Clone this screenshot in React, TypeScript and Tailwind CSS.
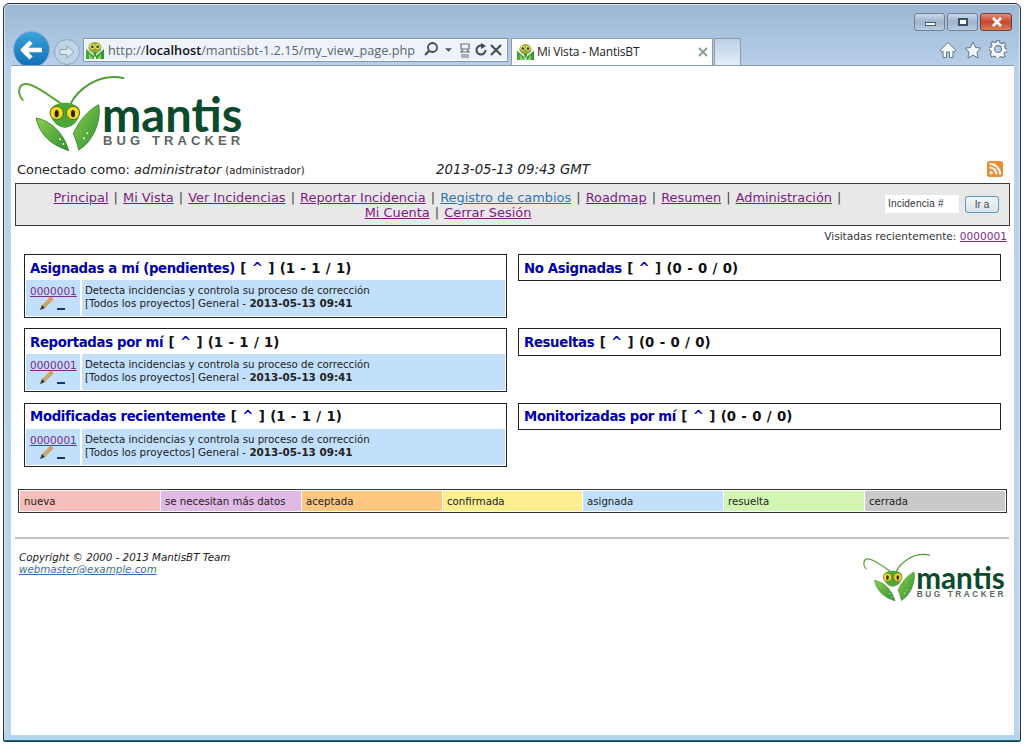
import React from "react";

const Mantis = ({ className }: { className: string }) => (
  <svg className={className} viewBox="0 0 720 255" fill="none">
    <defs>
      <linearGradient id="leaf" x1="0" y1="0" x2="1" y2="1">
        <stop offset="0" stopColor="#8fcf4a" />
        <stop offset="1" stopColor="#2f8f35" />
      </linearGradient>
    </defs>
    <path d="M172 114C125 82 72 40 45 42C24 45 22 70 38 90" stroke="#5ca83a" strokeWidth="6" strokeLinecap="round" />
    <path d="M180 105C200 62 262 8 340 24" stroke="#4f9c35" strokeWidth="6" strokeLinecap="round" />
    <path d="M78 144C120 152 160 185 176 242C150 232 95 215 78 144Z" fill="url(#leaf)" stroke="#3c8f33" strokeWidth="3" />
    <path d="M266 104C275 150 250 215 206 240C205 236 198 205 190 192C205 155 235 120 266 104Z" fill="url(#leaf)" stroke="#3c8f33" strokeWidth="3" />
    <path d="M122 118C135 92 195 92 208 118C212 150 190 172 165 174C140 172 118 150 122 118Z" fill="#4ea53a" />
    <circle cx="140" cy="129" r="20" fill="#f2d91f" stroke="#4a6e1c" strokeWidth="3" />
    <circle cx="189" cy="129" r="20" fill="#f2d91f" stroke="#4a6e1c" strokeWidth="3" />
    <ellipse cx="140" cy="131" rx="6" ry="11" fill="#2c1d0a" />
    <ellipse cx="189" cy="131" rx="6" ry="11" fill="#2c1d0a" />
    <circle cx="150" cy="208" r="3" fill="#e8f6df" />
    <circle cx="160" cy="222" r="3" fill="#e8f6df" />
    <circle cx="222" cy="205" r="3" fill="#e8f6df" />
    <circle cx="232" cy="190" r="3" fill="#e8f6df" />
  </svg>
);

const Favicon = ({ className }: { className: string }) => (
  <svg className={className} viewBox="0 0 18 18">
    <path d="M0 8L8 15V18H0Z" fill="#3fa53c" />
    <path d="M18 8L10 15V18H18Z" fill="#2f9a3a" />
    <path d="M3 12L7 18H3Z" fill="#8fd05a" />
    <path d="M15 12L11 18H15Z" fill="#8fd05a" />
    <ellipse cx="9" cy="6.500" rx="6.500" ry="5.500" fill="#9aa83a" />
    <circle cx="6.300" cy="5.500" r="2.600" fill="#e4e06a" />
    <circle cx="11.700" cy="5.500" r="2.600" fill="#e4e06a" />
    <circle cx="6.300" cy="5.800" r="1.300" fill="#2b3a14" />
    <circle cx="11.700" cy="5.800" r="1.300" fill="#2b3a14" />
    <path d="M7 11H11L9.500 16H8.500Z" fill="#4d8f2e" />
  </svg>
);

const Logo = ({ className }: { className: string }) => (
  <div className={`absolute w-[240px] h-[85px] origin-top-left ${className}`}>
    <Mantis className="absolute left-0 top-0 w-[240px] h-[85px]" />
    <span className="absolute left-[92px] top-[27px] text-[47px] leading-[34px] [font-family:Lato,sans-serif] font-bold text-[#0c4a2d]">mantis</span>
    <span className="absolute left-[93px] top-[65px] text-[13px] leading-[12px] [font-family:Liberation_Sans,sans-serif] font-bold tracking-[4.1px] whitespace-nowrap text-[#5c6560]">BUG TRACKER</span>
  </div>
);

const Row = ({ top }: { top: string }) => (
  <div className={`absolute left-[24px] w-[483px] h-[64px] border border-[#222] bg-white ${top}`}>
    <div className="absolute left-[1px] right-[1px] top-[25px] bottom-[1px] bg-[#c2dffb] flex">
      <div className="w-[56px] border-r-2 border-white relative">
        <a className="absolute left-[4px] top-[5px] text-[10.5px] leading-[13px] underline text-[#7d2a8a]">0000001</a>
        <svg className="absolute left-[13px] top-[16px] w-[15px] h-[15px]" viewBox="0 0 15 15">
          <path d="M1 14L3 9L10 2L13 5L6 12Z" fill="#c9a96a" />
          <path d="M9.500 2.500L11.500 0.500C12.500 0.300 14.500 2.300 14.200 3.500L12.500 5.500Z" fill="#e8935a" />
          <path d="M1 14L3 9L6 12Z" fill="#3a3a3a" />
        </svg>
        <div className="absolute left-[31px] top-[28px] w-[8px] h-[2px] bg-[#12366f]" />
      </div>
      <div className="pl-[3px] pt-[5px] text-[10.4px] leading-[12px] text-[#222] whitespace-nowrap">
        <div className="text-[10.2px]">Detecta incidencias y controla su proceso de corrección</div>
        <div>[Todos los proyectos] General - <b>2013-05-13 09:41</b></div>
      </div>
    </div>
  </div>
);

const Title = ({ left, top, name, count }: { left: string; top: string; name: string; count: string }) => (
  <div className={`absolute ${left} ${top} text-[13.3px] leading-[17px] font-bold whitespace-nowrap text-[#111] [word-spacing:0.7px]`}>
    <span className="text-[#0000b0] tracking-[-0.35px] [word-spacing:0px]">{name}</span> [ <span className="text-[#0000b0]">^</span> ] {count}
  </div>
);

const Empty = ({ top }: { top: string }) => (
  <div className={`absolute left-[518px] w-[483px] border border-[#222] ${top}`} />
);

const legend = [
  ["nueva", "bg-[#f7bfbb]", "w-[141px]"],
  ["se necesitan más datos", "bg-[#e0b9e4]", "w-[141px]"],
  ["aceptada", "bg-[#fdc77f]", "w-[141px]"],
  ["confirmada", "bg-[#fdee90]", "w-[140px]"],
  ["asignada", "bg-[#c2dffb]", "w-[141px]"],
  ["resuelta", "bg-[#d3f5b3]", "w-[141px]"],
  ["cerrada", "bg-[#c9c9c9]", "w-[140px]"],
];

const Sep = () => <span className="text-[#444] px-[1px]"> | </span>;
const L = ({ c, blue }: { c: string; blue?: boolean }) => (
  <a className={`underline ${blue ? "text-[#2d72b8]" : "text-[#7d1a82]"}`}>{c}</a>
);

export default function App() {
  return (
    <div className="relative w-[1024px] h-[745px] bg-white overflow-hidden [font-family:DejaVu_Sans,sans-serif]">
      {/* window frame */}
      <div className="absolute left-[3px] top-[3px] w-[1018px] h-[739px] rounded-t-[6px] rounded-b-[2px] border border-[#26343f] bg-linear-to-b from-[#9db7d4] from-0% via-[#b9d1ea] via-[9%] to-[#bcd5ea] shadow-[inset_0_0_0_1px_#dbe7f3]" />
      <div className="absolute left-[4px] bottom-[4px] w-[1016px] h-[9px] bg-linear-to-b from-[#bcd4ea] to-[#aed7ee] border-b border-[#0f6f85]" />

      {/* back / forward */}
      <div className="absolute left-[13px] top-[31px] w-[37px] h-[37px] rounded-full bg-linear-to-b from-[#3aa2dc] to-[#0d6fb4] border border-[#8cb0cf]">
        <svg className="absolute left-[6px] top-[8px] w-[24px] h-[20px]" viewBox="0 0 24 20">
          <path d="M11 2L3 10L11 18M4 10H22" stroke="#fff" strokeWidth="4.5" fill="none" strokeLinejoin="round" />
        </svg>
      </div>
      <div className="absolute left-[54px] top-[39px] w-[26px] h-[26px] rounded-full bg-[#c0d4e8] border border-[#8ea9c4]">
        <svg className="absolute left-[4px] top-[5px] w-[16px] h-[14px]" viewBox="0 0 16 14">
          <path d="M8 1L15 7L8 13V9.500H1V4.500H8Z" fill="#dde8f3" stroke="#8ba2b9" strokeWidth="1" strokeLinejoin="round" />
        </svg>
      </div>

      {/* address bar */}
      <div className="absolute left-[83px] top-[38px] w-[425px] h-[24px] border border-[#7f98ae] bg-[#edf3f9] shadow-[inset_0_0_0_1px_#fff]" />
      <Favicon className="absolute left-[86px] top-[41px] w-[18px] h-[18px]" />
      <div className="absolute left-[108px] top-[41px] h-[18px] text-[12.75px] leading-[18px] [font-family:Open_Sans,sans-serif] whitespace-nowrap text-[#5a6570]">
        http://<span className="text-[#111] font-semibold">localhost</span>/mantisbt-1.2.15/my_view_page.php
      </div>
      <svg className="absolute left-[423px] top-[41px] w-[16px] h-[16px]" viewBox="0 0 16 16" fill="none">
        <circle cx="9.5" cy="6.5" r="4.5" stroke="#3e4a54" strokeWidth="1.8" />
        <path d="M6 10L2 14" stroke="#3e4a54" strokeWidth="2.2" />
      </svg>
      <svg className="absolute left-[445px] top-[48px] w-[7px] h-[4px]" viewBox="0 0 8 4"><path d="M0 0H8L4 4Z" fill="#4a5660" /></svg>
      <svg className="absolute left-[459px] top-[43px] w-[12px] h-[15px]" viewBox="0 0 12 15" fill="none" stroke="#66727c" strokeWidth="1.2">
        <path d="M2 1H10V6H2ZM1 9H11M2 12H10M2 14H10M4 7L2 9M8 7L10 9" />
      </svg>
      <svg className="absolute left-[474px] top-[43px] w-[14px] h-[14px]" viewBox="0 0 14 14" fill="none">
        <path d="M11.5 7A4.5 4.5 0 1 1 8 2.7" stroke="#3e4a54" strokeWidth="2" />
        <path d="M7 0L12 3L7 6Z" fill="#3e4a54" />
      </svg>
      <svg className="absolute left-[490px] top-[44px] w-[12px] h-[12px]" viewBox="0 0 12 12"><path d="M1 1L11 11M11 1L1 11" stroke="#3e4a54" strokeWidth="2" /></svg>

      {/* tabs */}
      <div className="absolute left-[511px] top-[38px] w-[202px] h-[28px] bg-white border border-b-0 border-[#8b9cad]" />
      <Favicon className="absolute left-[517px] top-[43px] w-[17px] h-[17px]" />
      <div className="absolute left-[537px] top-[43px] text-[12px] leading-[18px] tracking-[-0.2px] [font-family:Open_Sans,sans-serif] whitespace-nowrap text-[#222]">Mi Vista - MantisBT</div>
      <svg className="absolute left-[698px] top-[47px] w-[10px] h-[10px]" viewBox="0 0 10 10"><path d="M1 1L9 9M9 1L1 9" stroke="#8c969f" strokeWidth="1.8" /></svg>
      <div className="absolute left-[714px] top-[38px] w-[27px] h-[27px] border border-b-0 border-[#8b9cad] bg-linear-to-b from-[#bcd0e6] to-[#e3edf7]" />

      {/* window buttons */}
      <div className="absolute left-[914px] top-[13px] w-[31px] h-[18px] rounded-[3px] border border-[#6d8197] bg-linear-to-b from-[#c9d9ea] via-[#9db4cc] to-[#b9cde2]">
        <div className="absolute left-[10px] top-[8px] w-[11px] h-[4px] bg-white border border-[#4a5a6a]" />
      </div>
      <div className="absolute left-[947px] top-[13px] w-[31px] h-[18px] rounded-[3px] border border-[#6d8197] bg-linear-to-b from-[#c9d9ea] via-[#9db4cc] to-[#b9cde2]">
        <div className="absolute left-[10px] top-[4px] w-[10px] h-[8px] bg-white border-2 border-[#3f4f5f]" />
      </div>
      <div className="absolute left-[980px] top-[13px] w-[32px] h-[18px] rounded-[3px] border border-[#6e3f36] bg-linear-to-b from-[#e08d78] via-[#c9452c] to-[#d67f5f]">
        <svg className="absolute left-[11px] top-[3px] w-[10px] h-[10px]" viewBox="0 0 10 10"><path d="M1 1L9 9M9 1L1 9" stroke="#fff" strokeWidth="2.6" /></svg>
      </div>

      {/* right icons */}
      <svg className="absolute left-[939px] top-[41px] w-[18px] h-[18px]" viewBox="0 0 18 18">
        <path d="M9 1.5L1 9.5L3 11L4 10V16.5H7.5V11H10.5V16.5H14V10L15 11L17 9.5Z" fill="#f4f8fc" stroke="#66788a" strokeWidth="1" strokeLinejoin="round" />
      </svg>
      <svg className="absolute left-[964px] top-[41px] w-[18px] h-[18px]" viewBox="0 0 18 18">
        <path d="M9 1L11.5 6.5L17 7.2L13 11L14 17L9 14L4 17L5 11L1 7.2L6.5 6.5Z" fill="#f4f8fc" stroke="#66788a" strokeWidth="1" strokeLinejoin="round" />
      </svg>
      <svg className="absolute left-[989px] top-[40px] w-[18px] h-[18px]" viewBox="0 0 24 24" fill="#f4f8fc" stroke="#66788a" strokeWidth="1.4">
        <path d="M10 1h4l.6 3 2.4 1 2.6-1.7 2.8 2.8L20.700 8.700l1 2.400 2.300.9v4l-3 .6-1 2.400 1.700 2.400-2.800 2.300-2.500-1.600-2.400 1-.5 2.400h-4l-.6-3-2.400-1-2.600 1.600L1.600 19l1.700-2.500-1-2.400L0 13.500v-3.500l3-.6 1-2.400L2.300 4.500 5.100 2l2.500 1.700 2-.9z" />
        <circle cx="12" cy="12" r="4.500" fill="#b9d1ea" />
      </svg>

      {/* page */}
      <div className="absolute left-[11px] top-[65px] w-[1003px] h-[670px] bg-white border-t border-[#8b9cad]" />

      <Logo className="left-[10px] top-[70px]" />

      <div className="absolute left-[17px] top-[162px] text-[12.9px] leading-[16px] whitespace-nowrap text-[#222]">
        Conectado como: <i>administrator</i> <span className="text-[10.2px]">(administrador)</span>
      </div>
      <div className="absolute left-[436px] top-[162px] text-[13.3px] leading-[16px] italic whitespace-nowrap text-[#222]">2013-05-13 09:43 GMT</div>
      <svg className="absolute left-[987px] top-[161px] w-[16px] h-[16px] rounded-[2px]" viewBox="0 0 16 16">
        <rect width="16" height="16" rx="2" fill="#f28a2e" />
        <circle cx="4.200" cy="11.800" r="1.700" fill="#fff" />
        <path d="M2.500 6.500A7 7 0 0 1 9.500 13.500M2.500 2.800A10.700 10.700 0 0 1 13.200 13.500" stroke="#fff" strokeWidth="2" fill="none" />
      </svg>

      {/* menu */}
      <div className="absolute left-[15px] top-[183px] w-[995px] h-[43px] bg-[#e8e8e8] border border-[#3c3c3c]" />
      <div className="absolute left-[16px] top-[190px] w-[864px] text-center text-[12.9px] leading-[15px] text-[#444]">
        <div className="whitespace-nowrap">
          <L c="Principal" /><Sep /><L c="Mi Vista" /><Sep /><L c="Ver Incidencias" /><Sep /><L c="Reportar Incidencia" /><Sep /><L c="Registro de cambios" blue /><Sep /><L c="Roadmap" /><Sep /><L c="Resumen" /><Sep /><L c="Administración" /><Sep />
        </div>
        <div className="whitespace-nowrap">
          <L c="Mi Cuenta" /><Sep /><L c="Cerrar Sesión" />
        </div>
      </div>
      <div className="absolute left-[885px] top-[195px] w-[74px] h-[18px] bg-white text-[10px] leading-[18px] pl-[3px] [font-family:Liberation_Sans,sans-serif] tracking-[0.2px] text-[#333]">Incidencia #</div>
      <div className="absolute left-[965px] top-[196px] w-[34px] h-[17px] rounded-[3px] border border-[#5d9cbc] bg-linear-to-b from-[#f0f5f8] to-[#d7e3ea] text-[10px] leading-[15px] text-center [font-family:Liberation_Sans,sans-serif] text-[#444]">Ir a</div>
      <div className="absolute right-[17px] top-[229px] text-[10.6px] leading-[14px] whitespace-nowrap text-[#333]">
        Visitadas recientemente: <a className="underline text-[#7d2a8a]">0000001</a>
      </div>

      {/* panels */}
      <Row top="top-[254px]" />
      <Title left="left-[30px]" top="top-[260px]" name="Asignadas a mí (pendientes)" count="(1 - 1 / 1)" />
      <Row top="top-[328px]" />
      <Title left="left-[30px]" top="top-[334px]" name="Reportadas por mí" count="(1 - 1 / 1)" />
      <Row top="top-[403px]" />
      <Title left="left-[30px]" top="top-[408px]" name="Modificadas recientemente" count="(1 - 1 / 1)" />

      <Empty top="top-[254px] h-[27px]" />
      <Title left="left-[524px]" top="top-[260px]" name="No Asignadas" count="(0 - 0 / 0)" />
      <Empty top="top-[328px] h-[28px]" />
      <Title left="left-[524px]" top="top-[334px]" name="Resueltas" count="(0 - 0 / 0)" />
      <Empty top="top-[403px] h-[27px]" />
      <Title left="left-[524px]" top="top-[408px]" name="Monitorizadas por mí" count="(0 - 0 / 0)" />

      {/* legend */}
      <div className="absolute left-[18px] top-[489px] w-[989px] h-[24px] border border-[#333] flex p-[1px] gap-0 bg-white">
        {legend.map(([t, bg, w]) => (
          <div key={t} className={`${bg} ${w} h-full pl-[4px] text-[10.2px] leading-[21px] whitespace-nowrap text-[#222] border-r border-white last:border-r-0`}>{t}</div>
        ))}
      </div>

      <div className="absolute left-[15px] top-[537px] w-[994px] h-[2px] bg-[#c2c2c2]" />

      <div className="absolute left-[19px] top-[551px] text-[10.3px] leading-[12px] italic whitespace-nowrap text-[#222]">
        <div>Copyright © 2000 - 2013 MantisBT Team</div>
        <a className="underline text-[#2d72b8]">webmaster@example.com</a>
      </div>

      <Logo className="left-[858px] top-[550px] scale-[0.632]" />
    </div>
  );
}
